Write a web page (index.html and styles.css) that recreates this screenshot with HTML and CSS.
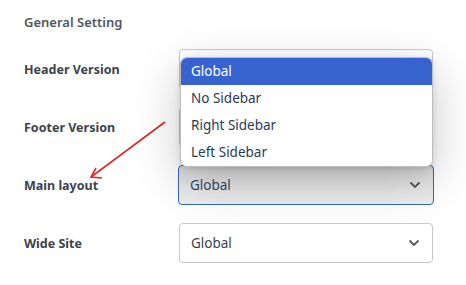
FILE: index.html
```html
<!DOCTYPE html>
<html lang="en">
<head>
    <meta charset="UTF-8">
    <title>General Setting</title>
    <link rel="stylesheet" href="styles.css">
</head>
<body>
    <div class="settings">
        <h2 class="settings-title">General Setting</h2>

        <div class="rows">
            <div class="row">
                <label class="row-label">Header Version</label>
                <div class="select-wrap">
                    <!-- value hidden behind the open list -->
                    <div class="select"></div>
                    <ul class="dropdown">
                        <li class="active">Global</li>
                        <li>No Sidebar</li>
                        <li>Right Sidebar</li>
                        <li>Left Sidebar</li>
                    </ul>
                </div>
            </div>

            <div class="row">
                <label class="row-label">Footer Version</label>
                <div class="select"></div>
            </div>

            <div class="row">
                <label class="row-label">Main layout</label>
                <div class="select focused">
                    <span>Global</span>
                    <svg class="chev" width="12" height="8" viewBox="0 0 12 8"><path d="M1.5 1.5 L6 6 L10.5 1.5" fill="none" stroke="#50575e" stroke-width="1.8"/></svg>
                </div>
            </div>

            <div class="row">
                <label class="row-label">Wide Site</label>
                <div class="select">
                    <span>Global</span>
                    <svg class="chev" width="12" height="8" viewBox="0 0 12 8"><path d="M1.5 1.5 L6 6 L10.5 1.5" fill="none" stroke="#50575e" stroke-width="1.8"/></svg>
                </div>
            </div>
        </div>

        <!-- red annotation arrow -->
        <svg class="arrow" width="466" height="285" viewBox="0 0 466 285">
            <path d="M165 122 L91 177" fill="none" stroke="#dd2a2a" stroke-width="1.6"/>
            <path d="M96 168 L91 177 L102 178" fill="none" stroke="#dd2a2a" stroke-width="1.6"/>
        </svg>
    </div>
</body>
</html>
```

FILE: styles.css
```css
* {
    margin: 0;
    padding: 0;
    box-sizing: border-box;
}

body {
    font-family: "Noto Sans", "Open Sans", sans-serif;
    background-color: #fff;
    color: #3c434a;
    width: 466px;
    height: 285px;
    overflow: hidden;
}

.settings {
    position: relative;
    padding: 12px 0 0 24px;
}

.settings-title {
    font-size: 13px;
    font-weight: 600;
    color: #50575e;
    line-height: 20px;
}

.rows {
    display: flex;
    flex-direction: column;
    gap: 18px;
    margin-top: 17px;
}

.row {
    display: grid;
    grid-template-columns: 155px 254px;
    align-items: center;
    height: 40px;
}

.row-label {
    font-size: 12.5px;
    font-weight: 700;
    color: #3c434a;
}

.select-wrap {
    position: relative;
}

.select {
    display: flex;
    align-items: center;
    justify-content: space-between;
    height: 40px;
    padding: 0 12px 0 11px;
    border: 1px solid #c9c9c9;
    border-radius: 4px;
    background: #fff;
    font-size: 13.5px;
    color: #3c434a;
}

.select.focused {
    margin-left: -1px;
    width: 256px;
    border-color: #2f6bb0;
    background: linear-gradient(180deg, #d9d9d9 0%, #e9e9e9 60%, #efefef 100%);
    color: #2e4a6b;
}

.chev {
    display: block;
}

.dropdown {
    position: absolute;
    top: 8px;
    left: 1px;
    width: 253px;
    list-style: none;
    background: #fff;
    border: 1px solid #bdbdbd;
    border-radius: 7px;
    overflow: hidden;
    box-shadow: 0 14px 48px rgba(0, 0, 0, 0.22), 0 2px 6px rgba(0, 0, 0, 0.12);
    z-index: 10;
}

.dropdown li {
    height: 27px;
    line-height: 27px;
    padding-left: 10px;
    font-size: 13.5px;
    color: #2b3a52;
}

.dropdown li.active {
    background: #3663cf;
    color: #fff;
}

.arrow {
    position: absolute;
    top: 0;
    left: 0;
    pointer-events: none;
}
```
